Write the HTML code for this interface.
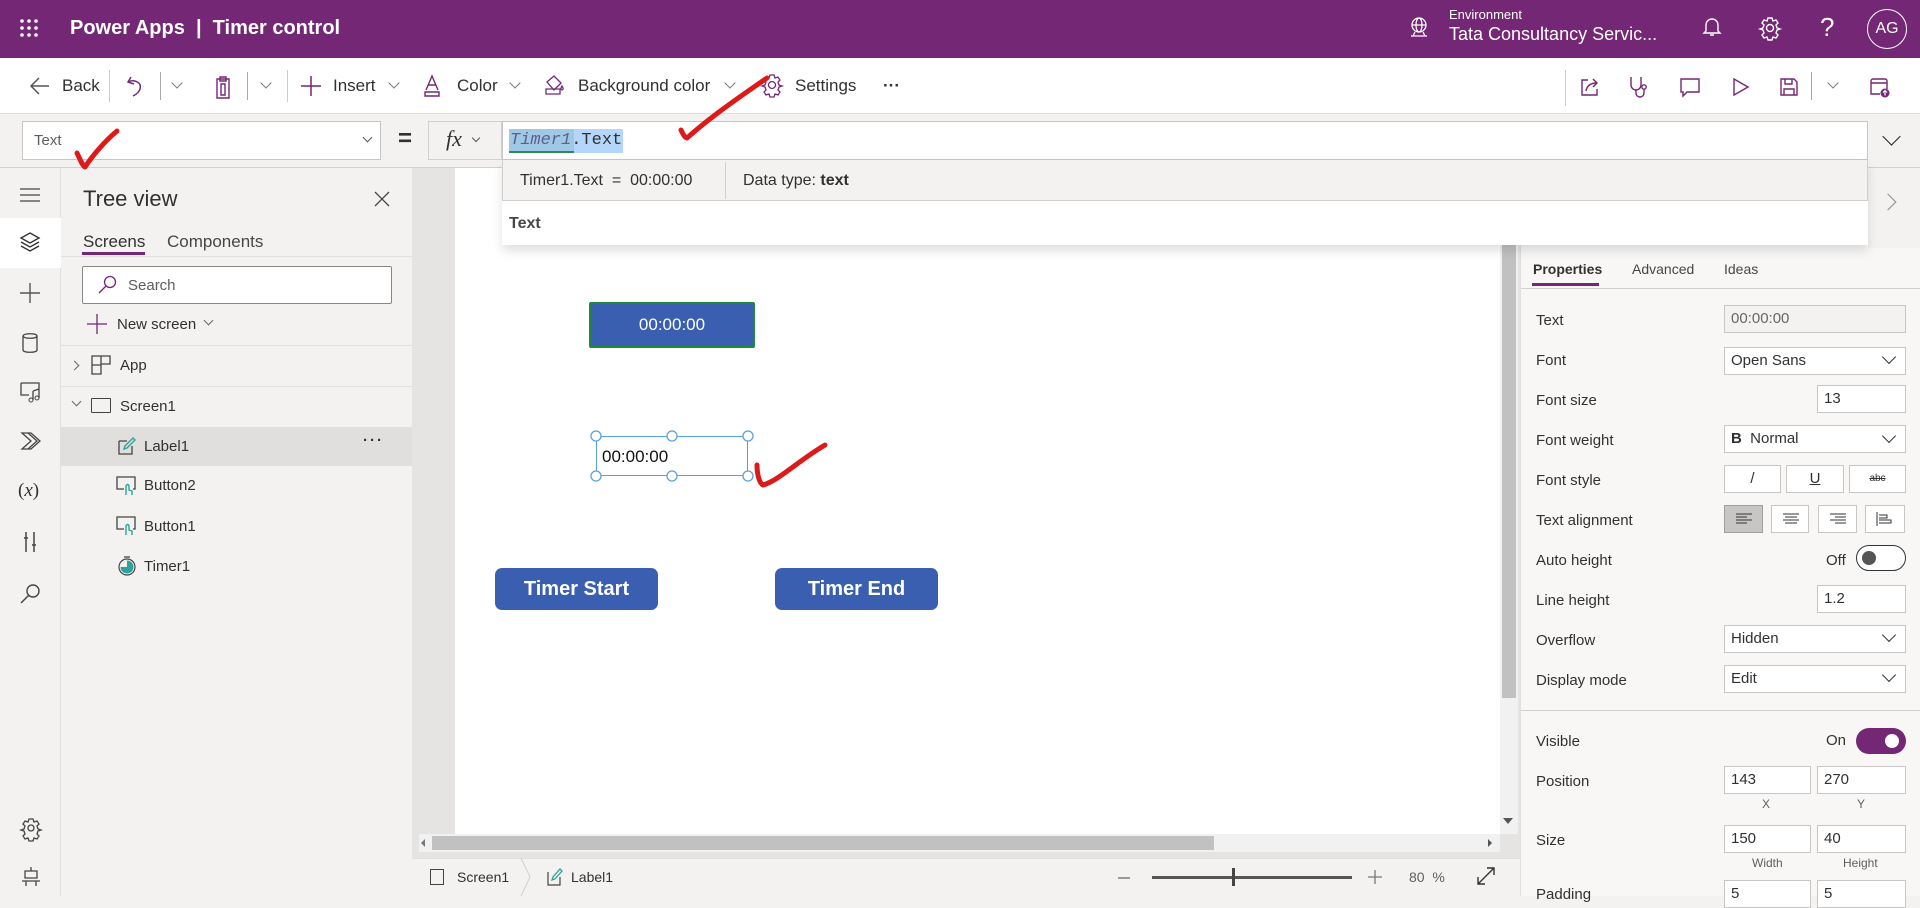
<!DOCTYPE html>
<html><head><meta charset="utf-8"><style>
*{box-sizing:border-box;margin:0;padding:0}
body{width:1920px;height:896px;overflow:hidden;position:relative;font-family:"Liberation Sans",sans-serif;color:#323130;background:#f3f2f1}
.a{position:absolute}
.t{position:absolute;white-space:nowrap}
.inp{position:absolute;background:#fff;border:1px solid #c8c6c4;font-size:15px;padding-left:6px;line-height:26px;height:28px}
.lbl{position:absolute;left:1536px;font-size:15px;color:#323130}
.chev{position:absolute;width:10px;height:10px;border-right:1.5px solid #333;border-bottom:1.5px solid #333;transform:rotate(45deg)}
.tb{font-size:17px;color:#323130}
svg{position:absolute;overflow:visible}
</style></head><body>

<!-- top bar -->
<div class="a" style="left:0;top:0;width:1920px;height:58px;background:#742774"></div>
<svg style="left:20px;top:19px" width="20" height="20"><g fill="#fff"><circle cx="2" cy="2" r="1.8"/><circle cx="9" cy="2" r="1.8"/><circle cx="16" cy="2" r="1.8"/><circle cx="2" cy="9" r="1.8"/><circle cx="9" cy="9" r="1.8"/><circle cx="16" cy="9" r="1.8"/><circle cx="2" cy="16" r="1.8"/><circle cx="9" cy="16" r="1.8"/><circle cx="16" cy="16" r="1.8"/></g></svg>
<div class="t" style="left:70px;top:17px;color:#fff;font-size:20px;font-weight:bold">Power Apps &nbsp;|&nbsp; Timer control</div>
<svg style="left:1408px;top:16px" width="22" height="22"><g fill="none" stroke="#fff" stroke-width="1.3"><circle cx="11" cy="9" r="7"/><ellipse cx="11" cy="9" rx="3" ry="7"/><path d="M4 9h14M3 20h16M7 16l-2 4M15 16l2 4"/></g></svg>
<div class="t" style="left:1449px;top:7px;color:#fff;font-size:13px">Environment</div>
<div class="t" style="left:1449px;top:24px;color:#fff;font-size:18px">Tata Consultancy Servic...</div>
<svg style="left:1703px;top:16px" width="18" height="22"><path d="M3 15V9a6 6 0 0 1 12 0v6l2 2H1z M7 19h4" fill="none" stroke="#fff" stroke-width="1.4"/></svg>
<svg style="left:1759px;top:17px" width="22" height="22"><g fill="none" stroke="#fff" stroke-width="1.4"><circle cx="11" cy="11" r="3.5"/><path d="M9 1h4l1 3 3-1 2 3-2 2 1 3 3 1v0l-3 1-1 3 2 2-2 3-3-1-1 3H9l-1-3-3 1-2-3 2-2-1-3-3-1 3-1 1-3-2-2 2-3 3 1z"/></g></svg>
<div class="t" style="left:1820px;top:12px;color:#fff;font-size:26px">?</div>
<div class="a" style="left:1867px;top:9px;width:40px;height:40px;border:1.3px solid #fff;border-radius:50%;color:#fff;font-size:16px;text-align:center;line-height:38px">AG</div>

<!-- toolbar -->
<div class="a" style="left:0;top:58px;width:1920px;height:56px;background:#fff;border-bottom:1px solid #e1dfdd"></div>
<svg style="left:30px;top:77px" width="20" height="18"><path d="M19 9H2M9 1L1 9l8 8" fill="none" stroke="#555" stroke-width="1.5"/></svg>
<div class="t tb" style="left:62px;top:76px">Back</div>
<div class="a" style="left:109px;top:70px;width:1px;height:32px;background:#ccc"></div>
<svg style="left:126px;top:75px" width="20" height="22"><path d="M5 2L2 7l6 2M2 7c6-3 14 0 12 7-1 4-5 6-7 7" fill="none" stroke="#742774" stroke-width="1.5"/></svg>
<div class="a" style="left:160px;top:72px;width:1px;height:28px;background:#aaa"></div>
<div class="chev" style="left:173px;top:79px;border-color:#777;width:8px;height:8px"></div>
<svg style="left:214px;top:75px" width="18" height="24"><path d="M3 4h12v19H3z M6 2h6v4H6z M7 9h4v11H7z" fill="none" stroke="#742774" stroke-width="1.4"/></svg>
<div class="a" style="left:247px;top:72px;width:1px;height:28px;background:#aaa"></div>
<div class="chev" style="left:262px;top:79px;border-color:#777;width:8px;height:8px"></div>
<div class="a" style="left:287px;top:70px;width:1px;height:32px;background:#ccc"></div>
<svg style="left:301px;top:76px" width="20" height="20"><path d="M10 0v20M0 10h20" stroke="#742774" stroke-width="1.5"/></svg>
<div class="t tb" style="left:333px;top:76px">Insert</div>
<div class="chev" style="left:390px;top:79px;border-color:#777;width:8px;height:8px"></div>
<svg style="left:423px;top:74px" width="18" height="24"><path d="M3 16L9 2l6 14M5 11h8M2 18h14v4H2z" fill="none" stroke="#742774" stroke-width="1.4"/></svg>
<div class="t tb" style="left:457px;top:76px">Color</div>
<div class="chev" style="left:511px;top:79px;border-color:#777;width:8px;height:8px"></div>
<svg style="left:544px;top:74px" width="22" height="22"><path d="M3 8l7-6 7 7-7 7z M18 12c1 2 2 3 0 4-2-1-1-2 0-4z M2 15h14v5H2z" fill="none" stroke="#742774" stroke-width="1.3"/></svg>
<div class="t tb" style="left:578px;top:76px">Background color</div>
<div class="chev" style="left:726px;top:79px;border-color:#777;width:8px;height:8px"></div>
<svg style="left:761px;top:74px" width="22" height="22"><g fill="none" stroke="#742774" stroke-width="1.3"><circle cx="11" cy="11" r="3.5"/><path d="M9 1h4l1 3 3-1 2 3-2 2 1 3 3 1-3 1-1 3 2 2-2 3-3-1-1 3H9l-1-3-3 1-2-3 2-2-1-3-3-1 3-1 1-3-2-2 2-3 3 1z"/></g></svg>
<div class="t tb" style="left:795px;top:76px">Settings</div>
<div class="t tb" style="left:883px;top:76px;font-weight:bold">···</div>
<div class="a" style="left:1565px;top:70px;width:1px;height:36px;background:#ccc"></div>
<svg style="left:1580px;top:77px" width="20" height="20"><path d="M8 3H2v15h15v-6 M6 14c1-6 5-8 11-8M13 2l4 4-4 4" fill="none" stroke="#742774" stroke-width="1.4"/></svg>
<svg style="left:1628px;top:75px" width="22" height="24"><path d="M3 2v8a5 5 0 0 0 10 0V2 M8 15v3a4 4 0 0 0 8 0v-4" fill="none" stroke="#742774" stroke-width="1.4"/><circle cx="16" cy="12" r="2.2" fill="none" stroke="#742774" stroke-width="1.4"/></svg>
<svg style="left:1679px;top:77px" width="22" height="20"><path d="M2 2h18v13H8l-4 4v-4H2z" fill="none" stroke="#742774" stroke-width="1.4"/></svg>
<svg style="left:1731px;top:77px" width="18" height="20"><path d="M3 2l14 8-14 8z" fill="none" stroke="#742774" stroke-width="1.4"/></svg>
<svg style="left:1779px;top:77px" width="20" height="20"><path d="M2 2h13l3 3v13H2z M6 2v5h7V2 M5 18v-6h10v6" fill="none" stroke="#742774" stroke-width="1.4"/></svg>
<div class="a" style="left:1811px;top:72px;width:1px;height:28px;background:#aaa"></div>
<div class="chev" style="left:1829px;top:79px;border-color:#777;width:8px;height:8px"></div>
<svg style="left:1869px;top:76px" width="22" height="22"><path d="M2 5a2 2 0 0 1 2-2h12a2 2 0 0 1 2 2v8 M2 5v13h9 M2 7h16" fill="none" stroke="#742774" stroke-width="1.4"/><circle cx="16" cy="17" r="4.5" fill="#742774"/><path d="M16 19.5v-5M14 16.5l2-2 2 2" stroke="#fff" stroke-width="1.2" fill="none"/></svg>

<!-- formula bar row -->
<div class="a" style="left:0;top:114px;width:1920px;height:54px;background:#f3f2f1;border-bottom:1px solid #d2d0ce"></div>
<div class="a" style="left:22px;top:121px;width:359px;height:39px;background:#fff;border:1px solid #c8c6c4"></div>
<div class="t" style="left:34px;top:132px;font-size:15px;color:#605e5c">Text</div>
<div class="chev" style="left:364px;top:134px;width:7px;height:7px;border-color:#555;border-width:1px"></div>
<div class="t" style="left:398px;top:125px;font-size:24px;font-weight:bold">=</div>
<div class="a" style="left:428px;top:121px;width:74px;height:39px;background:#f3f2f1;border:1px solid #d2d0ce"></div>
<div class="t" style="left:446px;top:126px;font-size:22px;font-style:italic;font-family:'Liberation Serif',serif">fx</div>
<div class="chev" style="left:473px;top:135px;width:6px;height:6px;border-color:#555;border-width:1px"></div>
<div class="a" style="left:502px;top:121px;width:1366px;height:39px;background:#fff;border:1px solid #c8c6c4"></div>
<div class="a" style="left:509px;top:129px;width:114px;height:24px;background:#b4d6fa"></div>
<div class="a" style="left:509px;top:129px;width:65px;height:24px;background:#9ec8e6;border-bottom:2px solid #2c8c54"></div>
<div class="t" style="left:510px;top:131px;font-size:17px;font-family:'Liberation Mono',monospace;color:#323130"><i style="color:#605e8c">Timer1</i>.Text</div>
<div class="chev" style="left:1885px;top:130px;width:13px;height:13px;border-color:#222"></div>

<!-- left rail -->
<div class="a" style="left:0;top:168px;width:61px;height:728px;background:#f3f2f1;border-right:1px solid #e1dfdd"></div>
<div class="a" style="left:0;top:218px;width:61px;height:50px;background:#fff"></div>
<svg style="left:20px;top:188px" width="20" height="14"><path d="M0 1h20M0 7h20M0 13h20" stroke="#444" stroke-width="1.3"/></svg>
<svg style="left:20px;top:232px" width="20" height="20"><path d="M10 1l9 5-9 5-9-5z M1 10l9 5 9-5 M1 14l9 5 9-5" fill="none" stroke="#333" stroke-width="1.4"/></svg>
<svg style="left:20px;top:283px" width="20" height="20"><path d="M10 0v20M0 10h20" stroke="#555" stroke-width="1.4"/></svg>
<svg style="left:22px;top:333px" width="16" height="20"><path d="M1 3v14c0 3 14 3 14 0V3 M1 3c0-3 14-3 14 0s-14 3-14 0" fill="none" stroke="#444" stroke-width="1.3"/></svg>
<svg style="left:20px;top:382px" width="22" height="20"><path d="M1 1h18v11 M1 1v12h8 M13 9v9M19 7v9 M13 9l6-2" fill="none" stroke="#444" stroke-width="1.3"/><circle cx="11" cy="18" r="2" fill="none" stroke="#444"/><circle cx="17" cy="16" r="2" fill="none" stroke="#444"/></svg>
<svg style="left:20px;top:431px" width="22" height="20"><path d="M2 2h9l9 8-9 8H2l9-8z M8 2l9 8-9 8" fill="none" stroke="#444" stroke-width="1.3"/></svg>
<div class="t" style="left:18px;top:480px;font-size:19px;font-family:'Liberation Serif',serif">(<i>x</i>)</div>
<svg style="left:23px;top:531px" width="14" height="22"><path d="M3 1v20M11 1v20M1 7h4M9 14h4" stroke="#444" stroke-width="1.5" fill="none"/></svg>
<svg style="left:20px;top:583px" width="22" height="22"><circle cx="13" cy="8" r="6" fill="none" stroke="#444" stroke-width="1.4"/><path d="M9 12L1 20" stroke="#444" stroke-width="1.5"/></svg>
<svg style="left:21px;top:818px" width="20" height="20"><g fill="none" stroke="#444" stroke-width="1.3"><circle cx="10" cy="10" r="3"/><path d="M8 1h4l1 3 3-1 2 3-2 2 1 3 3 1-3 1-1 3 2 2-2 3-3-1-1 3H8l-1-3-3 1-2-3 2-2-1-3-3-1 3-1 1-3-2-2 2-3 3 1z"/></g></svg>
<svg style="left:21px;top:866px" width="20" height="20"><path d="M10 1v4 M4 5h12v7H4z M1 15h18 M5 15v5M15 15v5" fill="none" stroke="#444" stroke-width="1.3"/></svg>

<!-- tree panel -->
<div class="a" style="left:61px;top:168px;width:351px;height:728px;background:#f3f2f1"></div>
<div class="t" style="left:83px;top:186px;font-size:22px">Tree view</div>
<svg style="left:374px;top:191px" width="16" height="16"><path d="M1 1l14 14M15 1L1 15" stroke="#444" stroke-width="1.3"/></svg>
<div class="t" style="left:83px;top:232px;font-size:17px">Screens</div>
<div class="t" style="left:167px;top:232px;font-size:17px;color:#484644">Components</div>
<div class="a" style="left:82px;top:252px;width:63px;height:3px;background:#742774"></div>
<div class="a" style="left:61px;top:256px;width:351px;height:1px;background:#e1dfdd"></div>
<div class="a" style="left:82px;top:266px;width:310px;height:38px;background:#fff;border:1px solid #8a8886;border-radius:2px"></div>
<svg style="left:98px;top:275px" width="20" height="20"><circle cx="12" cy="7" r="5.5" fill="none" stroke="#742774" stroke-width="1.3"/><path d="M8 11L1 18" stroke="#742774" stroke-width="1.3"/></svg>
<div class="t" style="left:128px;top:277px;font-size:15px;color:#605e5c">Search</div>
<svg style="left:87px;top:314px" width="20" height="20"><path d="M10 0v20M0 10h20" stroke="#742774" stroke-width="1.3"/></svg>
<div class="t" style="left:117px;top:316px;font-size:15px">New screen</div>
<div class="chev" style="left:205px;top:317px;width:7px;height:7px;border-color:#666;border-width:1px"></div>
<div class="a" style="left:61px;top:345px;width:351px;height:1px;background:#e1dfdd"></div>
<div class="chev" style="left:71px;top:362px;width:7px;height:7px;border-color:#666;border-width:1px;transform:rotate(-45deg)"></div>
<svg style="left:91px;top:355px" width="20" height="20"><path d="M1 1h18v8h-9v10H1z M10 1v8 M1 10h9" fill="none" stroke="#444" stroke-width="1.3"/></svg>
<div class="t" style="left:120px;top:357px;font-size:15px">App</div>
<div class="a" style="left:61px;top:386px;width:351px;height:1px;background:#e1dfdd"></div>
<div class="chev" style="left:73px;top:398px;width:7px;height:7px;border-color:#666;border-width:1px"></div>
<div class="a" style="left:91px;top:398px;width:20px;height:15px;border:1.3px solid #444;border-radius:1px"></div>
<div class="t" style="left:120px;top:398px;font-size:15px">Screen1</div>
<div class="a" style="left:61px;top:427px;width:351px;height:39px;background:#e1dfdd"></div>
<svg style="left:118px;top:437px" width="18" height="18"><path d="M1 4v13h13V9 M1 4h8" fill="none" stroke="#444" stroke-width="1.3"/><path d="M6 12l1-3 8-8 2 2-8 8z" fill="none" stroke="#2ea39b" stroke-width="1.4"/></svg>
<div class="t" style="left:144px;top:438px;font-size:15px">Label1</div>
<div class="t" style="left:363px;top:432px;font-size:15px;font-weight:bold;letter-spacing:2px">···</div>
<svg style="left:116px;top:476px" width="20" height="20"><path d="M8 13H1V1h18v12h-2" fill="none" stroke="#444" stroke-width="1.3"/><path d="M10 19v-9a1.5 1.5 0 0 1 3 0v4l3 1v4" fill="none" stroke="#2ea39b" stroke-width="1.4"/></svg>
<div class="t" style="left:144px;top:477px;font-size:15px">Button2</div>
<svg style="left:116px;top:516px" width="20" height="20"><path d="M8 13H1V1h18v12h-2" fill="none" stroke="#444" stroke-width="1.3"/><path d="M10 19v-9a1.5 1.5 0 0 1 3 0v4l3 1v4" fill="none" stroke="#2ea39b" stroke-width="1.4"/></svg>
<div class="t" style="left:144px;top:518px;font-size:15px">Button1</div>
<svg style="left:117px;top:555px" width="20" height="22"><circle cx="10" cy="12" r="8" fill="none" stroke="#444" stroke-width="1.2"/><path d="M10 12V5.5A6.5 6.5 0 1 1 3.5 12z" fill="#2ea39b"/><path d="M7 2h6" stroke="#444" stroke-width="1.3"/></svg>
<div class="t" style="left:144px;top:558px;font-size:15px">Timer1</div>

<!-- canvas -->
<div class="a" style="left:412px;top:168px;width:1108px;height:690px;background:#e5e4e3"></div>
<div class="a" style="left:455px;top:168px;width:1045px;height:666px;background:#fff"></div>
<div class="a" style="left:1500px;top:168px;width:18px;height:666px;background:#f1f1f1"></div>
<div class="a" style="left:1502px;top:168px;width:14px;height:530px;background:#c1c1c1"></div>
<div class="a" style="left:1503px;top:818px;width:0;height:0;border-left:5px solid transparent;border-right:5px solid transparent;border-top:6px solid #555"></div>
<div class="a" style="left:419px;top:834px;width:1081px;height:18px;background:#f1f1f1"></div>
<div class="a" style="left:432px;top:836px;width:782px;height:14px;background:#c1c1c1"></div>
<div class="a" style="left:421px;top:839px;width:0;height:0;border-top:4px solid transparent;border-bottom:4px solid transparent;border-right:4px solid #777"></div>
<div class="a" style="left:1488px;top:839px;width:0;height:0;border-top:4px solid transparent;border-bottom:4px solid transparent;border-left:4px solid #555"></div>

<div class="a" style="left:589px;top:302px;width:166px;height:46px;border:2px solid #1f8a3a;background:#3a5eb0;border-radius:2px"></div>
<div class="t" style="left:589px;top:315px;width:166px;text-align:center;color:#fff;font-size:17px">00:00:00</div>
<div class="a" style="left:596px;top:436px;width:152px;height:40px;border:1.3px solid #5aa1e3"></div>
<div class="t" style="left:602px;top:447px;font-size:17px;color:#111">00:00:00</div>
<svg style="left:590px;top:430px" width="170" height="55"><g fill="#fff" stroke="#5aa1e3" stroke-width="1.3"><circle cx="6" cy="6" r="5"/><circle cx="82" cy="6" r="5"/><circle cx="158" cy="6" r="5"/><circle cx="6" cy="46" r="5"/><circle cx="82" cy="46" r="5"/><circle cx="158" cy="46" r="5"/></g></svg>
<div class="a" style="left:495px;top:568px;width:163px;height:42px;background:#3a5eb0;border-radius:7px;color:#fff;font-size:20px;font-weight:bold;text-align:center;line-height:42px">Timer Start</div>
<div class="a" style="left:775px;top:568px;width:163px;height:42px;background:#3a5eb0;border-radius:7px;color:#fff;font-size:20px;font-weight:bold;text-align:center;line-height:42px">Timer End</div>

<!-- right panel -->
<div class="a" style="left:1520px;top:168px;width:400px;height:728px;background:#f8f7f6;border-left:1px solid #e1dfdd"></div>
<div class="a" style="left:1868px;top:168px;width:52px;height:80px;background:#f3f2f1"></div>
<div class="chev" style="left:1882px;top:196px;width:12px;height:12px;border-color:#999;border-width:1.2px;transform:rotate(-45deg)"></div>
<div class="t" style="left:1533px;top:261px;font-size:14px;font-weight:bold">Properties</div>
<div class="t" style="left:1632px;top:261px;font-size:14px;color:#484644">Advanced</div>
<div class="t" style="left:1724px;top:261px;font-size:14px;color:#484644">Ideas</div>
<div class="a" style="left:1532px;top:283px;width:67px;height:3px;background:#742774"></div>
<div class="a" style="left:1521px;top:288px;width:399px;height:1px;background:#d2d0ce"></div>

<div class="lbl" style="top:312px">Text</div>
<div class="inp" style="left:1724px;top:305px;width:182px;background:#f3f2f1;color:#666">00:00:00</div>
<div class="lbl" style="top:352px">Font</div>
<div class="inp" style="left:1724px;top:347px;width:182px">Open Sans</div><div class="chev" style="left:1884px;top:352px;width:10px;height:10px;border-width:1.3px"></div>
<div class="lbl" style="top:392px">Font size</div>
<div class="inp" style="left:1817px;top:385px;width:89px">13</div>
<div class="lbl" style="top:432px">Font weight</div>
<div class="inp" style="left:1724px;top:425px;width:182px"><b>B</b>&nbsp;&nbsp;Normal</div><div class="chev" style="left:1884px;top:431px;width:10px;height:10px;border-width:1.3px"></div>
<div class="lbl" style="top:472px">Font style</div>
<div class="inp" style="left:1724px;top:465px;width:57px;text-align:center;padding:0">/</div>
<div class="inp" style="left:1786px;top:465px;width:58px;text-align:center;padding:0;text-decoration:underline">U</div>
<div class="inp" style="left:1849px;top:465px;width:57px;text-align:center;padding:0;font-size:10px;text-decoration:line-through">abc</div>
<div class="lbl" style="top:512px">Text alignment</div>
<div class="inp" style="left:1724px;top:505px;width:39px;background:#c8c6c4;border-color:#a19f9d"></div>
<div class="inp" style="left:1771px;top:505px;width:38px"></div>
<div class="inp" style="left:1818px;top:505px;width:39px"></div>
<div class="inp" style="left:1865px;top:505px;width:40px"></div>
<svg style="left:1735px;top:512px" width="160" height="14"><g stroke="#333" stroke-width="1"><path d="M1 2h16M1 5h11M1 8h16M1 11h11"/><path d="M48 2h16M50 5h12M48 8h16M50 11h12"/><path d="M95 2h16M100 5h11M95 8h16M100 11h11"/><path d="M142 0v14M144 3h8v3h-8M144 8h12v3h-12" fill="none"/></g></svg>
<div class="lbl" style="top:552px">Auto height</div>
<div class="t" style="left:1826px;top:552px;font-size:15px">Off</div>
<div class="a" style="left:1856px;top:545px;width:50px;height:26px;border:1.3px solid #333;border-radius:13px;background:#fff"></div>
<div class="a" style="left:1862px;top:551px;width:14px;height:14px;border-radius:50%;background:#555"></div>
<div class="lbl" style="top:592px">Line height</div>
<div class="inp" style="left:1817px;top:585px;width:89px">1.2</div>
<div class="lbl" style="top:632px">Overflow</div>
<div class="inp" style="left:1724px;top:625px;width:182px">Hidden</div><div class="chev" style="left:1884px;top:630px;width:10px;height:10px;border-width:1.3px"></div>
<div class="lbl" style="top:672px">Display mode</div>
<div class="inp" style="left:1724px;top:665px;width:182px">Edit</div><div class="chev" style="left:1884px;top:670px;width:10px;height:10px;border-width:1.3px"></div>
<div class="a" style="left:1521px;top:710px;width:399px;height:1px;background:#d2d0ce"></div>
<div class="lbl" style="top:733px">Visible</div>
<div class="t" style="left:1826px;top:732px;font-size:15px">On</div>
<div class="a" style="left:1856px;top:728px;width:50px;height:26px;border-radius:13px;background:#742774"></div>
<div class="a" style="left:1885px;top:734px;width:14px;height:14px;border-radius:50%;background:#fff"></div>
<div class="lbl" style="top:773px">Position</div>
<div class="inp" style="left:1724px;top:766px;width:87px">143</div>
<div class="inp" style="left:1817px;top:766px;width:89px">270</div>
<div class="t" style="left:1762px;top:797px;font-size:12px;color:#605e5c">X</div>
<div class="t" style="left:1857px;top:797px;font-size:12px;color:#605e5c">Y</div>
<div class="lbl" style="top:832px">Size</div>
<div class="inp" style="left:1724px;top:825px;width:87px">150</div>
<div class="inp" style="left:1817px;top:825px;width:89px">40</div>
<div class="t" style="left:1752px;top:856px;font-size:12px;color:#605e5c">Width</div>
<div class="t" style="left:1843px;top:856px;font-size:12px;color:#605e5c">Height</div>
<div class="lbl" style="top:886px">Padding</div>
<div class="inp" style="left:1724px;top:880px;width:87px">5</div>
<div class="inp" style="left:1817px;top:880px;width:89px">5</div>

<!-- formula popup (on top) -->
<div class="a" style="left:502px;top:160px;width:1366px;height:85px;background:#fff;box-shadow:0 6px 10px rgba(0,0,0,.12)"></div>
<div class="a" style="left:502px;top:160px;width:1366px;height:41px;background:#f3f2f1;border:1px solid #d2d0ce;border-top:none"></div>
<div class="t" style="left:520px;top:172px;font-size:16px">Timer1.Text &nbsp;= &nbsp;00:00:00</div>
<div class="a" style="left:725px;top:162px;width:1px;height:37px;background:#d2d0ce"></div>
<div class="t" style="left:743px;top:172px;font-size:16px">Data type: <b>text</b></div>
<div class="t" style="left:509px;top:215px;font-size:16px;font-weight:bold;color:#484644">Text</div>
<div class="chev" style="left:1882px;top:196px;width:12px;height:12px;border-color:#999;border-width:1.2px;transform:rotate(-45deg)"></div>

<!-- status bar -->
<div class="a" style="left:412px;top:858px;width:1108px;height:38px;background:#f3f2f1;border-top:1px solid #e1dfdd"></div>
<div class="a" style="left:430px;top:869px;width:14px;height:16px;border:1.2px solid #444"></div>
<div class="t" style="left:457px;top:869px;font-size:14px">Screen1</div>
<svg style="left:520px;top:858px" width="12" height="38"><path d="M1 0l9 19-9 19" fill="none" stroke="#d2d0ce"/></svg>
<svg style="left:547px;top:868px" width="16" height="18"><path d="M1 4v13h12V9" fill="none" stroke="#444" stroke-width="1.2"/><path d="M5 12l1-3 7-8 2 2-7 8z" fill="none" stroke="#2ea39b" stroke-width="1.3"/></svg>
<div class="t" style="left:571px;top:869px;font-size:14px">Label1</div>
<div class="a" style="left:1118px;top:877px;width:12px;height:1.5px;background:#999"></div>
<div class="a" style="left:1152px;top:876px;width:200px;height:3px;background:#555"></div>
<div class="a" style="left:1232px;top:868px;width:3px;height:18px;background:#444"></div>
<svg style="left:1368px;top:870px" width="14" height="14"><path d="M7 0v14M0 7h14" stroke="#777" stroke-width="1.3"/></svg>
<div class="t" style="left:1409px;top:869px;font-size:14px;color:#605e5c">80 &nbsp;%</div>
<svg style="left:1476px;top:866px" width="20" height="20"><path d="M2 18L18 2M11 2h7v7M2 11v7h7" fill="none" stroke="#333" stroke-width="1.4"/></svg>

<!-- red annotation checks -->
<svg style="left:0;top:0" width="1920" height="896"><g fill="none" stroke="#dd1a1a" stroke-width="5" stroke-linecap="round" stroke-linejoin="round">
<path d="M77 153c3 6 5 12 8 14c8-12 20-26 32-36"/>
<path d="M681 130c2 4 4 8 6 8c20-18 45-36 80-60"/>
<path d="M757 465c0 8 2 18 6 20c15-4 35-24 62-40"/>
</g></svg>
</body></html>
